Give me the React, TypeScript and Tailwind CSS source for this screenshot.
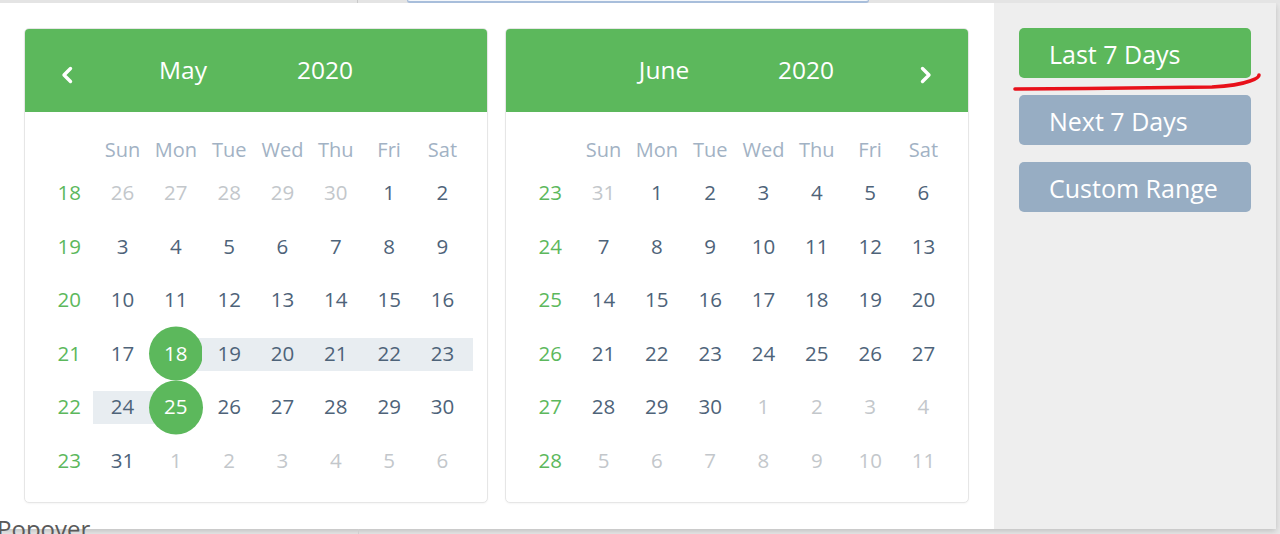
import React from "react";

type Day = { n: number; muted?: boolean; sel?: boolean; band?: "full" | "left" | "right" | "endRow" | "startRow" };
type Week = { wk: number; days: Day[] };

const weekdays = ["Sun", "Mon", "Tue", "Wed", "Thu", "Fri", "Sat"];

const range = (a: number, b: number, muted = false): Day[] =>
  Array.from({ length: b - a + 1 }, (_, i) => ({ n: a + i, muted }));

const may: Week[] = [
  { wk: 18, days: [...range(26, 30, true), ...range(1, 2)] },
  { wk: 19, days: range(3, 9) },
  { wk: 20, days: range(10, 16) },
  {
    wk: 21,
    days: [
      { n: 17 },
      { n: 18, sel: true, band: "right" },
      { n: 19, band: "full" },
      { n: 20, band: "full" },
      { n: 21, band: "full" },
      { n: 22, band: "full" },
      { n: 23, band: "endRow" },
    ],
  },
  {
    wk: 22,
    days: [{ n: 24, band: "startRow" }, { n: 25, sel: true, band: "left" }, ...range(26, 30)],
  },
  { wk: 23, days: [{ n: 31 }, ...range(1, 6, true)] },
];

const june: Week[] = [
  { wk: 23, days: [{ n: 31, muted: true }, ...range(1, 6)] },
  { wk: 24, days: range(7, 13) },
  { wk: 25, days: range(14, 20) },
  { wk: 26, days: range(21, 27) },
  { wk: 27, days: [...range(28, 30), ...range(1, 4, true)] },
  { wk: 28, days: range(5, 11, true) },
];

const bandClass: Record<string, string> = {
  full: "left-0 right-0",
  right: "left-1/2 right-0",
  left: "left-0 right-1/2",
  endRow: "left-0 -right-[4px]",
  startRow: "-left-[3px] right-0",
};

function Chevron({ dir }: { dir: "left" | "right" }) {
  return (
    <svg width="12" height="18" viewBox="0 0 12 18" className="mt-[9px]">
      <polyline
        points={dir === "left" ? "9.5,2.5 3,9 9.5,15.5" : "2.5,2.5 9,9 2.5,15.5"}
        fill="none"
        stroke="white"
        strokeWidth="3.4"
        strokeLinecap="round"
        strokeLinejoin="round"
      />
    </svg>
  );
}

function Calendar({ month, weeks, prev, next }: { month: string; weeks: Week[]; prev?: boolean; next?: boolean }) {
  return (
    <div className="w-[464px] h-[475px] bg-white border border-[#e6e6e6] rounded-[5px] shadow-[0_1px_2px_rgba(0,0,0,0.04)] overflow-hidden flex flex-col">
      {/* Header */}
      <div className="h-[83px] bg-[#5cb85c] grid grid-cols-[83px_150px_134px_1fr_84px] items-center text-white text-[24.5px] leading-none">
        <div className="flex justify-center">{prev && <Chevron dir="left" />}</div>
        <div className="text-center">{month}</div>
        <div className="text-center">2020</div>
        <div />
        <div className="flex justify-center">{next && <Chevron dir="right" />}</div>
      </div>

      {/* Grid */}
      <div className="pl-[17.5px] pt-[21px]">
        <div className="grid grid-cols-[repeat(8,53.33px)] h-[34px] items-center text-[20px] text-[#a2b2c4]">
          <div />
          {weekdays.map((d) => (
            <div key={d} className="text-center">
              {d}
            </div>
          ))}
        </div>
        {weeks.map((w) => (
          <div key={w.wk} className="grid grid-cols-[repeat(8,53.33px)] h-[53.5px] items-center text-[20.5px]">
            <div className="text-center text-[#5cb85c] -translate-y-[1px]">{w.wk}</div>
            {w.days.map((d, i) => (
              <div key={i} className="relative h-full flex items-center justify-center">
                {d.band && (
                  <div className={`absolute top-[10px] bottom-[10.5px] bg-[#e8edf1] ${bandClass[d.band]}`} />
                )}
                {d.sel && <div className="absolute w-[54px] h-[54px] rounded-full bg-[#5cb85c] -translate-y-[0.5px]" />}
                <span
                  className={`relative -translate-y-[1px] ${
                    d.sel ? "text-white" : d.muted ? "text-[#c3c7cb]" : "text-[#4e6379]"
                  }`}
                >
                  {d.n}
                </span>
              </div>
            ))}
          </div>
        ))}
      </div>
    </div>
  );
}

function RangeButton({ label, active }: { label: string; active?: boolean }) {
  return (
    <button
      className={`w-[232px] h-[50px] rounded-[5px] text-left pl-[30px] pt-[3px] text-[25px] text-white leading-none ${
        active ? "bg-[#5cb85c]" : "bg-[#97adc3]"
      }`}
    >
      {label}
    </button>
  );
}

export default function App() {
  return (
    <div
      className="relative w-[1280px] h-[534px] overflow-hidden bg-[#e8e8e8]"
      style={{ fontFamily: '"Open Sans", "Noto Sans", sans-serif' }}
    >
      {/* page behind the popover */}
      <div className="h-[3px] flex">
        <div className="w-[357px] bg-[#e4e4e4]" />
        <div className="w-[1px] bg-[#c9c9c9]" />
        <div className="w-[49px] bg-[#e4e4e4]" />
        <div className="w-[462px] border-b-[2px] border-x border-[#a8bedb] bg-[#f4f7fb] rounded-b-[3px]" />
        <div className="flex-1 bg-[#e4e4e4]" />
      </div>

      {/* popover */}
      <div className="w-[1276px] h-[526px] flex bg-white shadow-[0_2px_6px_rgba(0,0,0,0.18)]">
        <div className="w-[994px] flex gap-[17px] pl-[24px] pt-[25px]">
          <Calendar month="May" weeks={may} prev />
          <Calendar month="June" weeks={june} next />
        </div>
        <div className="flex-1 bg-[#eeeeee] pl-[25px] pt-[25px] flex flex-col gap-[17px]">
          <RangeButton label="Last 7 Days" active />
          <RangeButton label="Next 7 Days" />
          <RangeButton label="Custom Range" />
        </div>
      </div>

      <div className="absolute left-[358px] top-[529px] w-[1px] h-[5px] bg-[#cfcfcf]" />
      <div className="absolute -left-[3px] top-[517px] text-[24px] leading-none text-[#5a5a5a]">Popover</div>

      {/* red hand-drawn underline */}
      <svg className="absolute left-0 top-0 pointer-events-none" width="1280" height="534">
        <path
          d="M1015 89 C 1080 88.5, 1160 88, 1212 87 C 1232 86, 1242 84, 1250 81 C 1256 79, 1259 77, 1259 75"
          fill="none"
          stroke="#e8101a"
          strokeWidth="3.6"
          strokeLinecap="round"
        />
      </svg>
    </div>
  );
}
